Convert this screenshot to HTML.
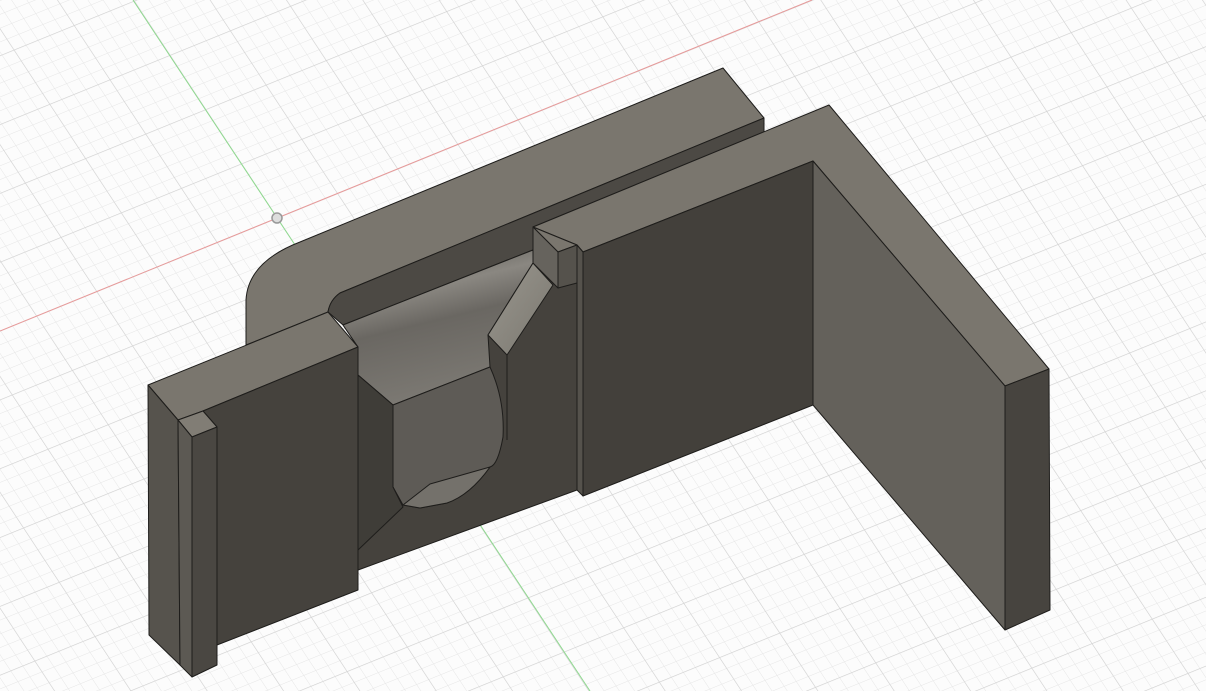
<!DOCTYPE html>
<html><head><meta charset="utf-8"><style>
html,body{margin:0;padding:0;background:#fcfcfc;width:1206px;height:691px;overflow:hidden}
svg{display:block}
</style></head><body>
<svg width="1206" height="691" viewBox="0 0 1206 691" xmlns="http://www.w3.org/2000/svg">
<defs>
<pattern id="minor" patternUnits="userSpaceOnUse" width="13" height="13" patternTransform="matrix(0.926 -0.377 0.55 0.835 277 218)">
<path d="M0 0H13M0 0V13" stroke="#e6e6e6" stroke-width="1" fill="none"/>
</pattern>
<pattern id="major" patternUnits="userSpaceOnUse" width="65" height="65" patternTransform="matrix(0.926 -0.377 0.55 0.835 277 218)">
<path d="M0 0H65M0 0V65" stroke="#d2d2d2" stroke-width="1.2" fill="none"/>
</pattern>
<linearGradient id="curv" x1="0" y1="0" x2="0.3" y2="1">
<stop offset="0" stop-color="#4a4843"/>
<stop offset="0.35" stop-color="#8a8781"/>
<stop offset="0.55" stop-color="#6a6762"/>
<stop offset="1" stop-color="#7c7973"/>
</linearGradient>
<linearGradient id="slant" x1="0" y1="0" x2="1" y2="1">
<stop offset="0" stop-color="#9a978f"/>
<stop offset="1" stop-color="#7a776f"/>
</linearGradient>
</defs>
<rect width="1206" height="691" fill="#fcfcfc"/>
<rect width="1206" height="691" fill="url(#minor)"/>
<rect width="1206" height="691" fill="url(#major)"/>
<line x1="0" y1="331" x2="812" y2="0" stroke="#e79a9a" stroke-width="1"/>
<line x1="133" y1="0" x2="590" y2="691" stroke="#8fd98f" stroke-width="1"/>
<g stroke="#1e1d1b" stroke-width="1" stroke-linejoin="round">
<!-- rail left side face -->
<path d="M246 300 L246 345 L330 312 Z" fill="#5a5751"/>
<!-- back rail top -->
<path d="M300 242 L723 68 L764 118 L340 293 Q330 300 328 312 L246 345 L246 300 Q248 262 300 242 Z" fill="#7a766e"/>
<!-- rail front (inner) face -->
<path d="M340 293 L764 118 L764 132 L533 227 L533 250 L343 325 L328 312 Q330 300 340 293 Z" fill="#4c4944"/>
<!-- cavity base dark fill -->
<path d="M343 325 L533 250 L577 248 L577 490 L358 570 L358 347 Z" fill="#45423d"/>
<!-- curved surface -->
<path d="M343 325 L533 250 L533 263 L488 335 L490 367 L393 405 L358 375 L358 347 Z" fill="url(#curv)"/>
<!-- U inner -->
<path d="M393 405 L490 367 Q505 400 503 437 Q498 465 490 467 Q470 495 447 503 L420 508 L403 505 L393 487 Z" fill="#5e5b56"/>
<path d="M403 505 L430 484 L490 467 Q470 495 447 503 L420 508 Z" fill="#74716b"/>
<!-- slant -->
<path d="M533 263 L553 285 L507 355 L488 335 Z" fill="url(#slant)"/>
<line x1="507" y1="355" x2="507" y2="440"/>
<!-- left wall of cavity & chamfer -->
<path d="M358 375 L393 405 L393 487 L403 507 L358 550 Z" fill="#3f3d38"/>
<!-- right block top -->
<path d="M533 227 L829 105 L1049 369 L1005 386 L813 161 L583 252 L577 245 Z" fill="#7a766e"/>
<!-- tab -->
<path d="M533 227 L577 245 L558 252 Z" fill="#7a766e"/>
<path d="M533 227 L558 252 L558 288 L533 263 Z" fill="#66635d"/>
<path d="M558 252 L577 245 L577 283 L558 288 Z" fill="#55524c"/>
<!-- right inner long face -->
<path d="M813 161 L1005 386 L1005 630 L813 405 Z" fill="#64615b"/>
<!-- front wall -->
<path d="M583 252 L813 161 L813 405 L583 496 Z" fill="#43403b"/>
<path d="M577 245 L583 252 L583 496 L577 490 Z" fill="#55524c"/>
<!-- end face -->
<path d="M1005 386 L1049 369 L1050 610 L1005 630 Z" fill="#47443f"/>
<!-- left block -->
<path d="M148 385 L328 312 L358 347 L203 411 L178 420 Z" fill="#7a766e"/>
<path d="M203 411 L358 347 L358 590 L217 645 L217 427 Z" fill="#45423d"/>
<path d="M148 385 L178 420 L180 665 L149 635 Z" fill="#56534d"/>
<path d="M178 420 L203 411 L217 427 L192 437 Z" fill="#817d75"/>
<path d="M178 420 L192 437 L192 677 L180 665 Z" fill="#5c5953"/>
<path d="M192 437 L217 427 L217 665 L192 677 Z" fill="#4a4742"/>
</g>
<circle cx="277" cy="218" r="5" fill="#ddd" stroke="#999" stroke-width="1.5"/>
</svg>
</body></html>
